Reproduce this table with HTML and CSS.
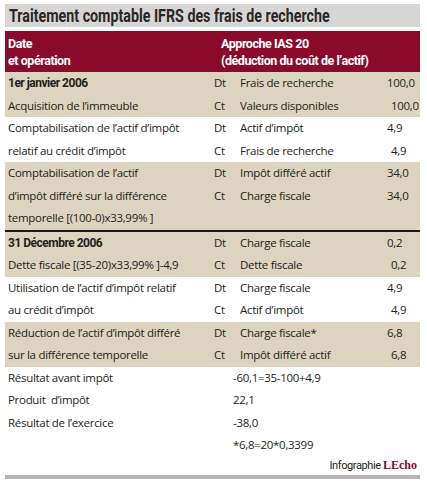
FILE: index.html
```html
<!DOCTYPE html>
<html>
<head>
	<meta charset="utf-8">
	<title>Traitement comptable IFRS des frais de recherche</title>
	<link rel="stylesheet" href="styles.css">
</head>
<body>
<div class="sheet">
	<h1 class="title"><span class="title-text">Traitement comptable IFRS des frais de recherche</span></h1>

	<div class="head">
		<div class="h-left">Date<br>et opération</div>
		<div class="h-right">Approche IAS 20<br>(déduction du coût de l’actif)</div>
	</div>

	<div class="group beige">
		<div class="row"><span class="lbl bold">1er janvier 2006</span><span class="dc">Dt</span><span class="acc">Frais de recherche</span><span class="val">100,0</span></div>
		<div class="row"><span class="lbl">Acquisition de l’immeuble</span><span class="dc">Ct</span><span class="acc">Valeurs disponibles</span><span class="val ct">100,0</span></div>
	</div>

	<div class="group">
		<div class="row"><span class="lbl">Comptabilisation de l’actif d’impôt</span><span class="dc">Dt</span><span class="acc">Actif d’impôt</span><span class="val">4,9</span></div>
		<div class="row"><span class="lbl">relatif au crédit d’impôt</span><span class="dc">Ct</span><span class="acc">Frais de recherche</span><span class="val ct">4,9</span></div>
	</div>

	<div class="group beige">
		<div class="row"><span class="lbl">Comptabilisation de l’actif</span><span class="dc">Dt</span><span class="acc">Impôt différé actif</span><span class="val">34,0</span></div>
		<div class="row"><span class="lbl">d’impôt différé sur la différence</span><span class="dc">Ct</span><span class="acc">Charge fiscale</span><span class="val">34,0</span></div>
		<div class="row"><span class="lbl">temporelle [(100-0)x33,99% ]</span></div>
	</div>

	<div class="group beige sep">
		<div class="row"><span class="lbl bold">31 Décembre 2006</span><span class="dc">Dt</span><span class="acc">Charge fiscale</span><span class="val">0,2</span></div>
		<div class="row"><span class="lbl">Dette fiscale [(35-20)x33,99% ]-4,9</span><span class="dc">Ct</span><span class="acc">Dette fiscale</span><span class="val ct">0,2</span></div>
	</div>

	<div class="group">
		<div class="row"><span class="lbl">Utilisation de l’actif d’impôt relatif</span><span class="dc">Dt</span><span class="acc">Charge fiscale</span><span class="val">4,9</span></div>
		<div class="row"><span class="lbl">au crédit d’impôt</span><span class="dc">Ct</span><span class="acc">Actif d’impôt</span><span class="val ct">4,9</span></div>
	</div>

	<div class="group beige">
		<div class="row"><span class="lbl">Réduction de l’actif d’impôt différé</span><span class="dc">Dt</span><span class="acc">Charge fiscale*</span><span class="val">6,8</span></div>
		<div class="row"><span class="lbl">sur la différence temporelle</span><span class="dc">Ct</span><span class="acc">Impôt différé actif</span><span class="val ct">6,8</span></div>
	</div>

	<div class="group total">
		<div class="row"><span class="lbl">Résultat avant impôt</span><span class="sum">-60,1=35-100+4,9</span></div>
		<div class="row"><span class="lbl">Produit&nbsp; d’impôt</span><span class="sum">22,1</span></div>
		<div class="row"><span class="lbl">Résultat de l’exercice</span><span class="sum">-38,0</span></div>
		<div class="row"><span class="lbl"></span><span class="sum">*6,8=20*0,3399</span></div>
	</div>

	<div class="credit"><span class="credit-text">Infographie</span> <span class="logo">LEcho</span></div>
	<div class="bottom-bar"></div>
</div>
</body>
</html>
```

FILE: styles.css
```css
*{
	margin:0px;
	padding:0px;
	box-sizing:border-box;
}
body{
	background:#fff;
	color:#231f20;
	font-family:"Open Sans",Lato,sans-serif;
	font-size:11.5px;
	letter-spacing:-0.3px;
}
.sheet{
	width:415px;
	margin:4px 0 0 5px;
}
.title{
	height:23px;
	background:#d7d6d4;
	padding-left:4px;
	font-family:Roboto,"DejaVu Sans Condensed",sans-serif;
	font-size:19px;
	font-weight:bold;
	letter-spacing:0;
	line-height:23px;
	color:#2a2526;
	white-space:nowrap;
}
.title-text{
	display:inline-block;
	transform:scaleX(0.75);
	transform-origin:left center;
}
.head{
	margin-top:4px;
	height:41px;
	background:#8a0a2b;
	color:#fff;
	display:grid;
	grid-template-columns:213px 1fr;
	padding:4px 0 0 3px;
	font-family:Roboto,sans-serif;
	font-size:12.5px;
	font-weight:bold;
	letter-spacing:-0.45px;
	line-height:17px;
}
.group.beige{
	background:#dcd4bf;
}
.group.sep{
	border-top:2px solid #1c1a1a;
}
.row{
	display:grid;
	grid-template-columns:209px 26px 147px 1fr;
	height:22.5px;
	line-height:22.5px;
	white-space:nowrap;
}
.lbl{
	padding-left:3px;
}
.bold{
	font-family:Roboto,sans-serif;
	font-weight:bold;
	font-size:12px;
	letter-spacing:-0.5px;
}
.val.ct{
	padding-left:4px;
}
.total .row{
	grid-template-columns:228px 1fr;
}
.credit{
	height:13px;
	margin-top:2px;
	text-align:right;
	padding-right:3px;
	font-family:Roboto,sans-serif;
	font-size:11px;
	letter-spacing:-0.4px;
	line-height:13px;
}
.logo{
	font-family:"Liberation Serif",serif;
	font-weight:bold;
	letter-spacing:0;
	color:#8a0a2b;
	font-size:12px;
}
.bottom-bar{
	margin-top:3px;
	height:4px;
	background:#b7b6b4;
}
```
